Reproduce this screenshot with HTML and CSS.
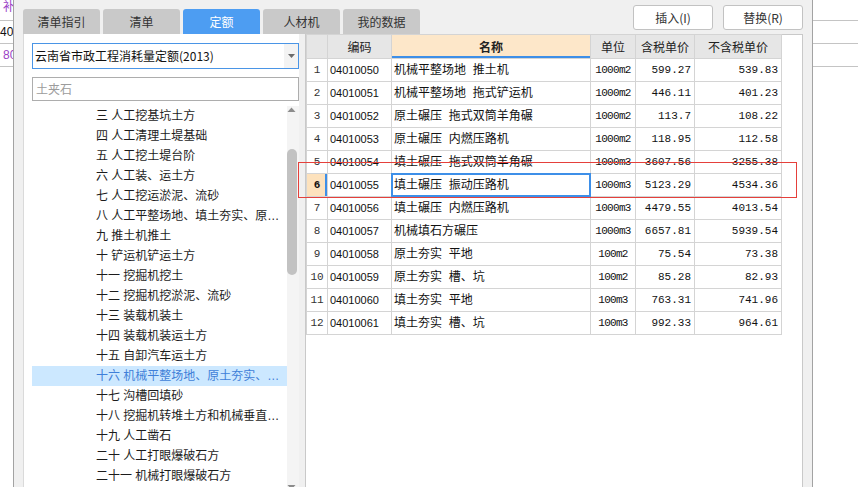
FILE: index.html
```html
<!DOCTYPE html>
<html lang="zh-CN">
<head>
<meta charset="utf-8">
<title>定额</title>
<link rel="stylesheet" href="styles.css">
</head>
<body>
<div class="app">
  <div class="strip strip-left">
    <div class="sc first purple">补</div>
    <div class="sc">406</div>
    <div class="sc purple">80</div>
  </div>

  <div class="dialog">
    <div class="topbar">
      <div class="tabs">
        <div class="tab">清单指引</div>
        <div class="tab">清单</div>
        <div class="tab active">定额</div>
        <div class="tab">人材机</div>
        <div class="tab">我的数据</div>
      </div>
      <div class="actions">
        <button class="btn">插入(I)</button>
        <button class="btn">替换(R)</button>
      </div>
    </div>

    <div class="body">
      <div class="side">
        <div class="combo">
          <span class="combo-text">云南省市政工程消耗量定额(2013)</span>
          <span class="combo-btn"><svg width="7" height="4" viewBox="0 0 7 4"><path d="M0 0 H7 L3.5 4 Z" fill="#6b6b6b"/></svg></span>
        </div>
        <div class="search">土夹石</div>
        <div class="tree">
          <ul class="tree-list">
            <li>三 人工挖基坑土方</li>
            <li>四 人工清理土堤基础</li>
            <li>五 人工挖土堤台阶</li>
            <li>六 人工装、运土方</li>
            <li>七 人工挖运淤泥、流砂</li>
            <li>八 人工平整场地、填土夯实、原土碾压</li>
            <li>九 推土机推土</li>
            <li>十 铲运机铲运土方</li>
            <li>十一 挖掘机挖土</li>
            <li>十二 挖掘机挖淤泥、流砂</li>
            <li>十三 装载机装土</li>
            <li>十四 装载机装运土方</li>
            <li>十五 自卸汽车运土方</li>
            <li class="sel">十六 机械平整场地、原土夯实、填土碾压</li>
            <li>十七 沟槽回填砂</li>
            <li>十八 挖掘机转堆土方和机械垂直运输</li>
            <li>十九 人工凿石</li>
            <li>二十 人工打眼爆破石方</li>
            <li>二十一 机械打眼爆破石方</li>
          </ul>
          <div class="vscroll">
            <span class="arrow up"><svg width="12" height="8" viewBox="0 0 12 8"><path d="M0.5 6 L4.5 1.5 L8.5 6 Z" fill="#8c8c8c"/></svg></span>
            <span class="thumb"></span>
            <span class="arrow down"><svg width="12" height="6" viewBox="0 0 12 6"><path d="M0.5 1 L8.5 1 L4.5 5.5 Z" fill="#8c8c8c"/></svg></span>
          </div>
        </div>
      </div>

      <div class="grid-panel">
        <table class="grid">
          <colgroup>
            <col class="c-no"><col class="c-code"><col class="c-name"><col class="c-unit"><col class="c-tax"><col class="c-notax">
          </colgroup>
          <thead>
            <tr>
              <th></th>
              <th>编码</th>
              <th class="h-name">名称</th>
              <th>单位</th>
              <th>含税单价</th>
              <th>不含税单价</th>
            </tr>
          </thead>
          <tbody>
            <tr><td class="no">1</td><td class="code">04010050</td><td class="name">机械平整场地  推土机</td><td class="unit">1000m2</td><td class="num">599.27</td><td class="num">539.83</td></tr>
            <tr><td class="no">2</td><td class="code">04010051</td><td class="name">机械平整场地  拖式铲运机</td><td class="unit">1000m2</td><td class="num">446.11</td><td class="num">401.23</td></tr>
            <tr><td class="no">3</td><td class="code">04010052</td><td class="name">原土碾压  拖式双筒羊角碾</td><td class="unit">1000m2</td><td class="num">113.7</td><td class="num">108.22</td></tr>
            <tr><td class="no">4</td><td class="code">04010053</td><td class="name">原土碾压  内燃压路机</td><td class="unit">1000m2</td><td class="num">118.95</td><td class="num">112.58</td></tr>
            <tr><td class="no">5</td><td class="code">04010054</td><td class="name">填土碾压  拖式双筒羊角碾</td><td class="unit">1000m3</td><td class="num">3607.56</td><td class="num">3255.38</td></tr>
            <tr class="current"><td class="no">6</td><td class="code">04010055</td><td class="name focus">填土碾压  振动压路机</td><td class="unit">1000m3</td><td class="num">5123.29</td><td class="num">4534.36</td></tr>
            <tr><td class="no">7</td><td class="code">04010056</td><td class="name">填土碾压  内燃压路机</td><td class="unit">1000m3</td><td class="num">4479.55</td><td class="num">4013.54</td></tr>
            <tr><td class="no">8</td><td class="code">04010057</td><td class="name">机械填石方碾压</td><td class="unit">1000m3</td><td class="num">6657.81</td><td class="num">5939.54</td></tr>
            <tr><td class="no">9</td><td class="code">04010058</td><td class="name">原土夯实  平地</td><td class="unit">100m2</td><td class="num">75.54</td><td class="num">73.38</td></tr>
            <tr><td class="no">10</td><td class="code">04010059</td><td class="name">原土夯实  槽、坑</td><td class="unit">100m2</td><td class="num">85.28</td><td class="num">82.93</td></tr>
            <tr><td class="no">11</td><td class="code">04010060</td><td class="name">填土夯实  平地</td><td class="unit">100m3</td><td class="num">763.31</td><td class="num">741.96</td></tr>
            <tr><td class="no">12</td><td class="code">04010061</td><td class="name">填土夯实  槽、坑</td><td class="unit">100m3</td><td class="num">992.33</td><td class="num">964.61</td></tr>
          </tbody>
        </table>
      </div>
    </div>
  </div>

  <div class="strip strip-right">
    <div class="sc first"></div>
    <div class="sc"></div>
    <div class="sc"></div>
  </div>
</div>
<div class="mark"></div>
</body>
</html>
```

FILE: styles.css
```css
* { box-sizing: border-box; }
html, body { margin: 0; padding: 0; }
body {
  width: 858px;
  height: 487px;
  overflow: hidden;
  position: relative;
  background: #fff;
  font-family: "Noto Sans CJK SC", sans-serif;
  font-size: 12px;
  color: #222;
}
.app { display: flex; height: 487px; }

/* background strips */
.strip { background: #fff; overflow: hidden; }
.strip-left { width: 14px; border-right: 1px solid #a3a3a3; }
.strip-right { width: 45px; }
.sc {
  height: 23px;
  border-bottom: 1px solid #c4c4c4;
  line-height: 22px;
  white-space: nowrap;
  font-family: "Liberation Sans", "Noto Sans CJK SC", sans-serif;
  font-size: 12px;
  color: #111;
}
.sc.first { height: 21px; line-height: 14px; padding-left: 3px; }
.strip-left .sc:nth-child(3) { padding-left: 3px; }
.purple { color: #9b3fc6; }

/* dialog */
.dialog {
  width: 799px;
  background: #f0f0f0;
  border-right: 1px solid #a3a3a3;
  padding: 0 9px;
  display: flex;
  flex-direction: column;
}
.topbar { height: 34px; display: flex; align-items: flex-start; }
.tabs { display: flex; gap: 3px; margin-top: 9px; }
.tab {
  width: 77px;
  height: 25px;
  line-height: 25px;
  text-align: center;
  background: #c9c9c9;
  color: #333;
  border-radius: 3px 3px 0 0;
}
.tab.active { background: #4d9df2; color: #fff; }
.actions { margin-left: auto; margin-top: 5px; display: flex; gap: 10px; }
.btn {
  width: 80px;
  height: 25px;
  padding: 0;
  border: 1px solid #c2c2c2;
  border-radius: 3px;
  background: #fff;
  font: inherit;
  color: #333;
  line-height: 23px;
}

.body { flex: 1; display: flex; gap: 6px; min-height: 0; }

/* left side */
.side {
  width: 276px;
  background: #fff;
  border-left: 1px solid #dadada;
  padding: 9px 0 0 8px;
  display: flex;
  flex-direction: column;
  min-height: 0;
}
.combo {
  height: 26px;
  border: 1px solid #4a95e6;
  display: flex;
  align-items: stretch;
}
.combo-text { flex: 1; padding-left: 2px; line-height: 24px; color: #111; white-space: nowrap; }
.combo-btn {
  width: 14px;
  background: #f3f3f3;
  display: flex;
  align-items: center;
  justify-content: center;
}
.search {
  margin-top: 8px;
  height: 24px;
  border: 1px solid #adadad;
  padding-left: 3px;
  line-height: 22px;
  color: #9c9c9c;
}
.tree { margin-top: 5px; flex: 1; display: flex; min-height: 0; overflow: hidden; }
.tree-list {
  flex: 1;
  min-width: 0;
  list-style: none;
  margin: 0;
  padding: 0;
  font-family: "Liberation Sans", "Noto Sans CJK SC", sans-serif;
  font-size: 12px;
  color: #1c1c1c;
}
.tree-list li {
  height: 20px;
  line-height: 20px;
  padding: 0 4px 0 64px;
  white-space: nowrap;
  overflow: hidden;
  text-overflow: ellipsis;
}
.tree-list li.sel { background: #cce8ff; color: #3f7fd8; }
.vscroll {
  width: 12px;
  background: #f4f4f4;
  display: flex;
  flex-direction: column;
}
.arrow { display: block; line-height: 0; }
.arrow.up { height: 12px; }
.thumb {
  display: block;
  width: 10px;
  height: 126px;
  margin-top: 31px;
  background: #c2c2c2;
  border-radius: 5px;
}
.arrow.down { margin-top: auto; height: 6px; margin-bottom: -3px; }

/* grid */
.grid-panel {
  width: 498px;
  background: #fff;
  border: 1px solid #c9c9c9;
  border-bottom: none;
}
.grid {
  table-layout: fixed;
  border-collapse: separate;
  border-spacing: 1px;
  background: #d4d4d4;
  width: 476px;
  margin-top: -1px;
}
.c-no { width: 20px; }
.c-code { width: 63px; }
.c-name { width: 198px; }
.c-unit { width: 44px; }
.c-tax { width: 58px; }
.c-notax { width: 86px; }
.grid th {
  height: 23px;
  padding: 0;
  background: #e6e6e6;
  font-weight: normal;
  text-align: center;
  color: #222;
  line-height: 23px;
  white-space: nowrap;
}
.grid th.h-name { background: #fde7c9; font-weight: bold; box-shadow: inset 0 -2px 0 #3d8fe8; }
.grid td {
  height: 22px;
  padding: 0 2px;
  background: #fff;
  line-height: 22px;
  white-space: nowrap;
  overflow: hidden;
  color: #111;
}
.grid td.no { text-align: center; padding: 0; font-family: "Liberation Mono", monospace; font-size: 11px; color: #333; }
.grid td.code { font-family: "Liberation Sans", sans-serif; font-size: 11px; }
.grid td.name { font-family: "Liberation Sans", "Noto Sans CJK SC", sans-serif; font-size: 12px; white-space: pre; }
.grid td.unit { text-align: center; padding: 0; font-family: "Liberation Mono", monospace; font-size: 11px; letter-spacing: -0.7px; }
.grid td.num { text-align: right; padding-right: 3px; font-family: "Liberation Mono", monospace; font-size: 11px; }
.grid tr.current td.no { background: #fde2bd; font-weight: bold; color: #111; box-shadow: inset -2px 0 0 #3d8fe8; }
.grid td.focus { outline: 2px solid #3d8fe8; outline-offset: -1px; }

/* red annotation frame */
.mark {
  position: absolute;
  left: 298px;
  top: 162px;
  width: 499px;
  height: 36px;
  border: 1px solid #e5403b;
  pointer-events: none;
}
```
